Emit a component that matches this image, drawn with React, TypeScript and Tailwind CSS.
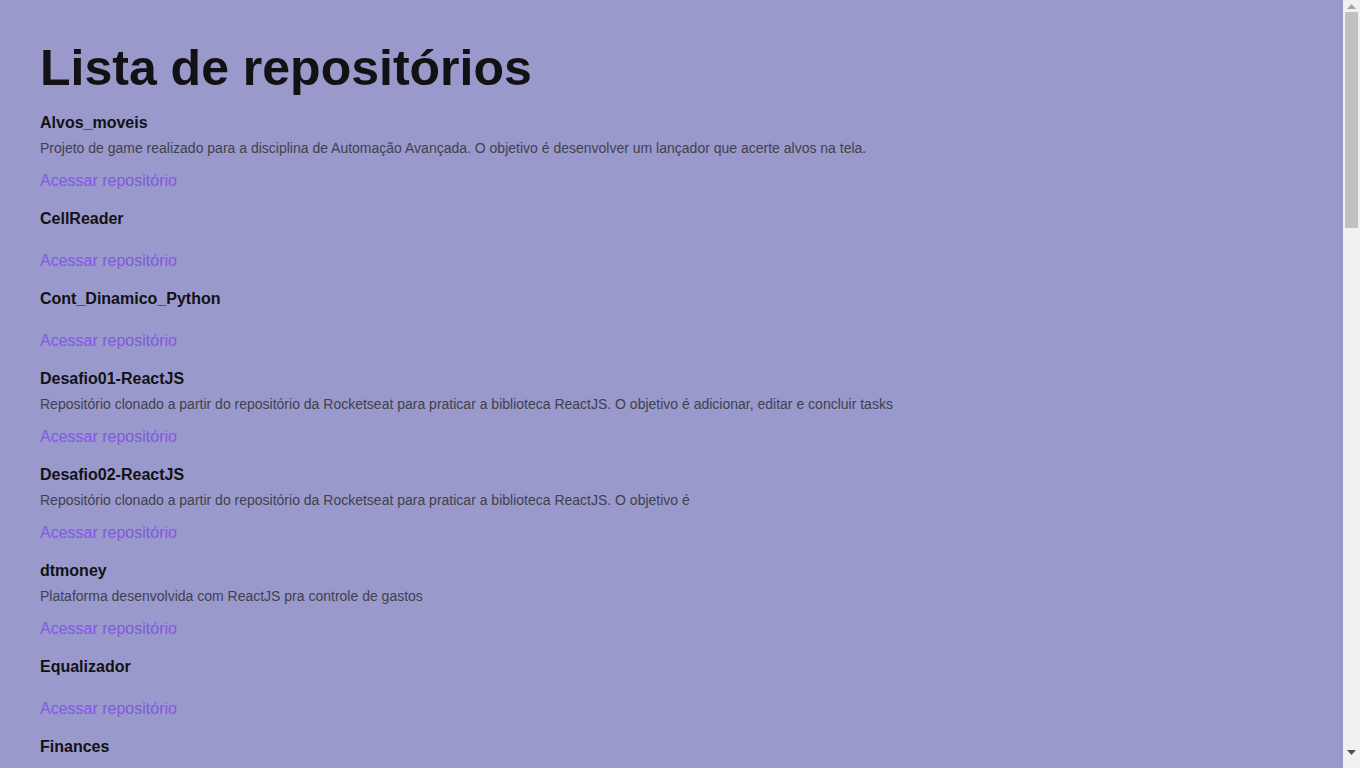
import React from 'react';

interface Repo {
  name: string;
  description?: string;
}

const repos: Repo[] = [
  { name: 'Alvos_moveis', description: 'Projeto de game realizado para a disciplina de Automação Avançada. O objetivo é desenvolver um lançador que acerte alvos na tela.' },
  { name: 'CellReader' },
  { name: 'Cont_Dinamico_Python' },
  { name: 'Desafio01-ReactJS', description: 'Repositório clonado a partir do repositório da Rocketseat para praticar a biblioteca ReactJS. O objetivo é adicionar, editar e concluir tasks' },
  { name: 'Desafio02-ReactJS', description: 'Repositório clonado a partir do repositório da Rocketseat para praticar a biblioteca ReactJS. O objetivo é' },
  { name: 'dtmoney', description: 'Plataforma desenvolvida com ReactJS pra controle de gastos' },
  { name: 'Equalizador' },
  { name: 'Finances' },
  { name: 'github-explorer', description: 'Listagem de repositórios do GitHub consumindo a API pública' },
  { name: 'ignite-feed' },
  { name: 'ignite-shop', description: 'E-commerce desenvolvido com Next.js e integração com Stripe' },
  { name: 'ignite-timer' },
  { name: 'Lista_de_tarefas', description: 'Aplicação simples de lista de tarefas com JavaScript' },
  { name: 'meu-portfolio' },
  { name: 'Monitor_Serial', description: 'Leitura de dados via porta serial com Python' },
  { name: 'nlw-copa' },
  { name: 'nlw-esports', description: 'Projeto desenvolvido durante a NLW eSports da Rocketseat' },
  { name: 'nlw-return' },
  { name: 'PID_Arduino', description: 'Controlador PID implementado em Arduino' },
  { name: 'pokedex' },
  { name: 'Projeto_Sinais', description: 'Processamento digital de sinais em Python' },
  { name: 'react-native-app' },
  { name: 'rocketnotes', description: 'Aplicação de notas desenvolvida no Explorer da Rocketseat' },
  { name: 'Simulador_Robo' },
  { name: 'todo-list', description: 'Lista de tarefas desenvolvida com React e TypeScript' },
  { name: 'upload-files' },
  { name: 'weather-app', description: 'Aplicação de previsão do tempo consumindo API' },
  { name: 'zoo-manager' },
];

function RepositoryItem({ repo }: { repo: Repo }) {
  return (
    <li className="flex flex-col mb-5">
      <strong className="text-[16px] leading-[18px] font-bold text-[#121214]">{repo.name}</strong>
      <p className="mt-[8px] text-[14px] leading-[16px] text-[#41414d]">{repo.description}</p>
      <a href="#" className="mt-[16px] text-[16px] leading-[18px] text-[#8257e5]">
        Acessar repositório
      </a>
    </li>
  );
}

function Scrollbar() {
  return (
    <div className="w-[17px] shrink-0 bg-[#f1f1f1] flex flex-col items-center">
      <svg width="9" height="5" viewBox="0 0 9 5" className="mt-[4px]">
        <path d="M0 5 L4.5 0 L9 5 Z" fill="#a3a3a3" />
      </svg>
      <div className="mt-[3px] w-[13px] h-[216px] bg-[#c1c1c1]" />
      <div className="flex-1" />
      <svg width="9" height="5" viewBox="0 0 9 5" className="mb-[13px]">
        <path d="M0 0 L9 0 L4.5 5 Z" fill="#505050" />
      </svg>
    </div>
  );
}

export default function App() {
  return (
    <div
      className="h-screen flex bg-[#9999cc]"
      style={{ fontFamily: '"Liberation Sans", Arial, sans-serif' }}
    >
      <div className="flex-1 overflow-y-auto [scrollbar-width:none]">
        <main className="px-10 pt-10 pb-10">
          <h1 className="text-[50px] leading-[56px] font-bold text-[#121214]">Lista de repositórios</h1>
          <ul className="mt-[18px] flex flex-col">
            {repos.map((repo) => (
              <RepositoryItem key={repo.name} repo={repo} />
            ))}
          </ul>
        </main>
      </div>
      <Scrollbar />
    </div>
  );
}
